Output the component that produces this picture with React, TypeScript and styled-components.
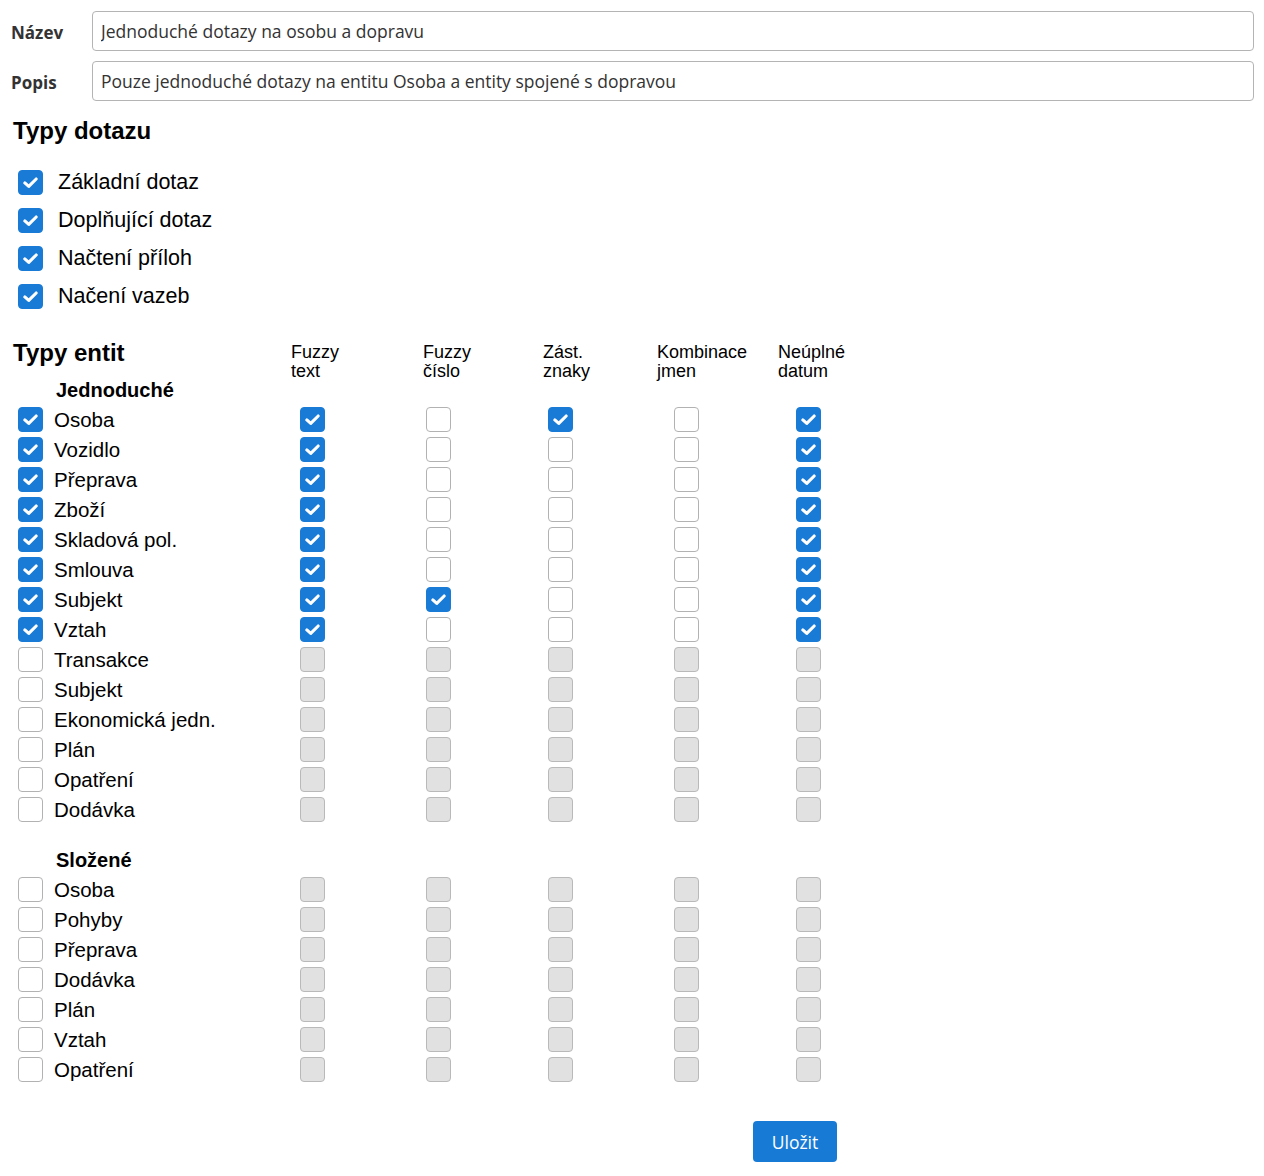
import React from "react";
import styled, { createGlobalStyle } from "styled-components";

const GlobalStyle = createGlobalStyle`
  body { margin: 0; background: #fff; }
  * { box-sizing: border-box; }
`;

const COLS = "280px 132px 120px 114px 121px 120px";
const SHIFTS = [9, 3, 5, 17, 18];

const Page = styled.div`
  padding: 11px 10px 40px 11px;
  font-family: "Liberation Sans", Arial, sans-serif;
  color: #000;
`;

const FieldRow = styled.div`
  display: flex;
  align-items: center;
  height: 40px;
  & + & { margin-top: 10px; }
`;

const FieldLabel = styled.label`
  width: 81px;
  flex: none;
  font-family: "Open Sans", sans-serif;
  font-weight: 700;
  font-size: 17px;
  color: #333;
  padding-top: 2px;
`;

const TextInput = styled.input`
  flex: 1;
  height: 40px;
  border: 1px solid #b4b4b4;
  border-radius: 4px;
  padding: 0 8px;
  font-family: "Open Sans", sans-serif;
  font-size: 17.5px;
  color: #333;
  outline: none;
`;

const SectionTitle = styled.h2`
  margin: 0 0 0 2px;
  font-size: 24px;
  line-height: 26px;
  font-weight: 700;
`;

const QueryTitle = styled(SectionTitle)`
  margin-top: 17px;
`;

const EntityTitle = styled(SectionTitle)`
  margin-top: -2px;
`;

const QueryList = styled.div`
  margin-top: 19px;
  padding-left: 7px;
  display: flex;
  flex-direction: column;
`;

const QueryRow = styled.div`
  display: flex;
  align-items: center;
  height: 38px;
  gap: 15px;
  font-size: 21.5px;
`;

const Box = styled.span<{ $state: "on" | "off" | "disabled"; $shift?: number }>`
  display: inline-flex;
  align-items: center;
  justify-content: center;
  flex: none;
  width: 25px;
  height: 25px;
  margin-left: ${(p) => p.$shift ?? 0}px;
  border-radius: 4px;
  border: 1px solid
    ${(p) => (p.$state === "on" ? "#197bd6" : p.$state === "disabled" ? "#b9b9b9" : "#b2b2b2")};
  background: ${(p) => (p.$state === "on" ? "#197bd6" : p.$state === "disabled" ? "#e1e1e1" : "#fff")};
`;

const Check = () => (
  <svg width="21" height="21" viewBox="0 0 24 24" fill="none">
    <path d="M5.5 12.5 L10 16.5 L18.5 8" stroke="#fff" strokeWidth="3.6" strokeLinecap="round" strokeLinejoin="round" />
  </svg>
);

const CheckBox = ({ state, shift }: { state: "on" | "off" | "disabled"; shift?: number }) => (
  <Box $state={state} $shift={shift} role="checkbox" aria-checked={state === "on"}>
    {state === "on" && <Check />}
  </Box>
);

const EntityTable = styled.div`
  margin-top: 27px;
  display: flex;
  flex-direction: column;
`;

const GridRow = styled.div`
  display: grid;
  grid-template-columns: ${COLS};
  align-items: center;
`;

const HeaderRow = styled(GridRow)`
  height: 38px;
  align-items: start;
`;

const ColHeader = styled.div`
  font-size: 18px;
  line-height: 19px;
  margin-top: 1px;
`;

const GroupLabel = styled.div<{ $gap: number }>`
  margin: ${(p) => p.$gap}px 0 4px 45px;
  font-size: 20px;
  line-height: 20px;
  font-weight: 700;
`;

const EntityRow = styled(GridRow)`
  height: 30px;
`;

const EntityName = styled.div`
  display: flex;
  align-items: center;
  gap: 11px;
  padding-left: 7px;
  font-size: 20.5px;
  padding-top: 1px;
`;

const Cell = styled.div`
  display: flex;
  align-items: center;
`;

const SaveButton = styled.button`
  margin: 37px 0 0 742px;
  width: 84px;
  height: 41px;
  border: none;
  border-radius: 4px;
  background: #177bd6;
  color: #fff;
  font-family: "Open Sans", sans-serif;
  font-size: 17.5px;
  padding-top: 2px;
`;

type Entity = { name: string; on: boolean; flags: number[] };

const simple: Entity[] = [
  { name: "Osoba", on: true, flags: [1, 0, 1, 0, 1] },
  { name: "Vozidlo", on: true, flags: [1, 0, 0, 0, 1] },
  { name: "Přeprava", on: true, flags: [1, 0, 0, 0, 1] },
  { name: "Zboží", on: true, flags: [1, 0, 0, 0, 1] },
  { name: "Skladová pol.", on: true, flags: [1, 0, 0, 0, 1] },
  { name: "Smlouva", on: true, flags: [1, 0, 0, 0, 1] },
  { name: "Subjekt", on: true, flags: [1, 1, 0, 0, 1] },
  { name: "Vztah", on: true, flags: [1, 0, 0, 0, 1] },
  ...["Transakce", "Subjekt", "Ekonomická jedn.", "Plán", "Opatření", "Dodávka"].map((n) => ({
    name: n,
    on: false,
    flags: [0, 0, 0, 0, 0],
  })),
];

const composite: Entity[] = ["Osoba", "Pohyby", "Přeprava", "Dodávka", "Plán", "Vztah", "Opatření"].map((n) => ({
  name: n,
  on: false,
  flags: [0, 0, 0, 0, 0],
}));

const headers = [
  ["Fuzzy", "text"],
  ["Fuzzy", "číslo"],
  ["Zást.", "znaky"],
  ["Kombinace", "jmen"],
  ["Neúplné", "datum"],
];

const Rows = ({ items }: { items: Entity[] }) => (
  <>
    {items.map((e, i) => (
      <EntityRow key={i}>
        <EntityName>
          <CheckBox state={e.on ? "on" : "off"} />
          <span>{e.name}</span>
        </EntityName>
        {e.flags.map((f, j) => (
          <Cell key={j}>
            <CheckBox state={!e.on ? "disabled" : f ? "on" : "off"} shift={SHIFTS[j]} />
          </Cell>
        ))}
      </EntityRow>
    ))}
  </>
);

export default function App() {
  return (
    <Page>
      <GlobalStyle />
      <FieldRow>
        <FieldLabel>Název</FieldLabel>
        <TextInput defaultValue="Jednoduché dotazy na osobu a dopravu" />
      </FieldRow>
      <FieldRow>
        <FieldLabel>Popis</FieldLabel>
        <TextInput defaultValue="Pouze jednoduché dotazy na entitu Osoba a entity spojené s dopravou" />
      </FieldRow>

      <QueryTitle>Typy dotazu</QueryTitle>
      <QueryList>
        {["Základní dotaz", "Doplňující dotaz", "Načtení příloh", "Načení vazeb"].map((q) => (
          <QueryRow key={q}>
            <CheckBox state="on" />
            <span>{q}</span>
          </QueryRow>
        ))}
      </QueryList>

      <EntityTable>
        <HeaderRow>
          <EntityTitle>Typy entit</EntityTitle>
          {headers.map((h) => (
            <ColHeader key={h.join()}>
              {h[0]}
              <br />
              {h[1]}
            </ColHeader>
          ))}
        </HeaderRow>
        <GroupLabel $gap={0}>Jednoduché</GroupLabel>
        <Rows items={simple} />
        <GroupLabel $gap={26}>Složené</GroupLabel>
        <Rows items={composite} />
      </EntityTable>

      <SaveButton>Uložit</SaveButton>
    </Page>
  );
}
